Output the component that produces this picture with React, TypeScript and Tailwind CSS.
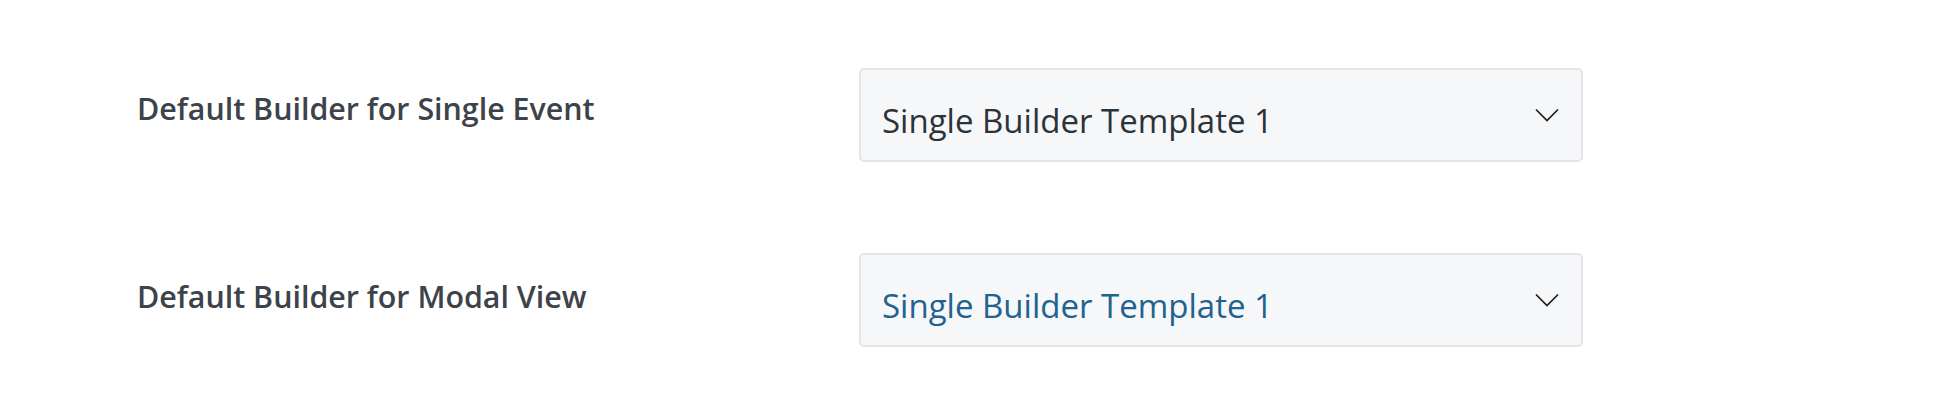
import React from "react";

const rows = [
  { label: "Default Builder for Single Event", value: "Single Builder Template 1", tone: "text-[#2c3338]", top: "pt-[21px]" },
  { label: "Default Builder for Modal View", value: "Single Builder Template 1", tone: "text-[#22628f]", top: "pt-[24px]" },
];

function Chevron() {
  return (
    <svg width="24" height="14" viewBox="0 0 24 14" fill="none" className="shrink-0">
      <polyline points="1,1.5 12,12.5 23,1.5" stroke="#1e1e1e" strokeWidth="1.7" />
    </svg>
  );
}

export default function App() {
  return (
    <div className="w-[1947px] h-[420px] bg-white pl-[137px] pt-[68px] flex flex-col gap-[91px]" style={{ fontFamily: '"Open Sans", "Noto Sans", sans-serif' }}>
      {rows.map((r) => (
        <div key={r.label} className="flex items-start">
          <div className={`w-[722px] shrink-0 ${r.top} text-[30.4px] leading-[40px] font-semibold text-[#3c434a]`}>{r.label}</div>
          <div className="w-[724px] h-[94px] flex items-center justify-between pl-[21px] pr-[22px] bg-[#f6f7f8] border-2 border-[#e4e5e7] rounded-[5px]">
            <span className={`text-[33px] leading-[44px] pt-[12px] ${r.tone}`}>{r.value}</span>
            <Chevron />
          </div>
        </div>
      ))}
    </div>
  );
}
